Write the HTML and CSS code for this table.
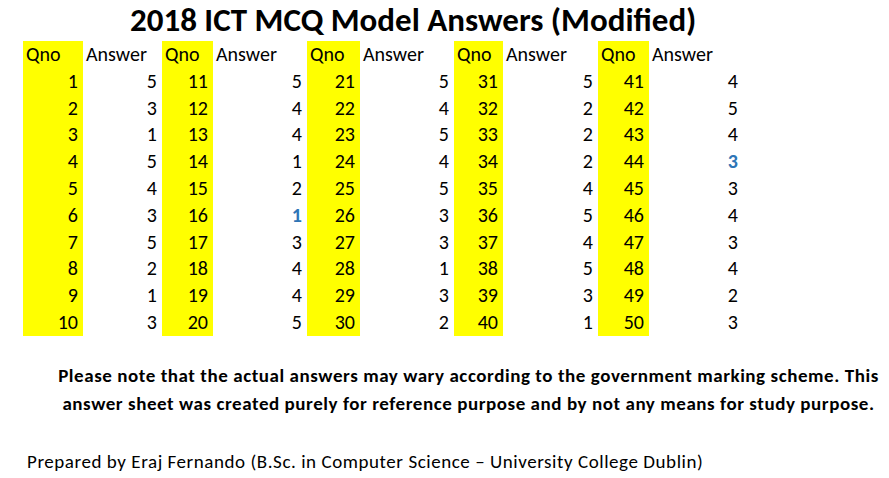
FILE: index.html
```html
<!DOCTYPE html>
<html>
<head>
<meta charset="utf-8">
<link rel="stylesheet" href="styles.css">
</head>
<body>
<div class="sheet">
  <h1 class="title">2018 ICT MCQ Model Answers (Modified)</h1>
  <table class="answers">
    <colgroup>
      <col class="c1"><col class="c2"><col class="c3"><col class="c4"><col class="c5"><col class="c6"><col class="c7"><col class="c8"><col class="c9"><col class="c10">
    </colgroup>
    <tr class="head">
      <td class="q">Qno</td><td>Answer</td><td class="q">Qno</td><td>Answer</td><td class="q">Qno</td><td>Answer</td><td class="q">Qno</td><td>Answer</td><td class="q">Qno</td><td>Answer</td>
    </tr>
    <tr><td class="q">1</td><td>5</td><td class="q">11</td><td>5</td><td class="q">21</td><td>5</td><td class="q">31</td><td>5</td><td class="q">41</td><td>4</td></tr>
    <tr><td class="q">2</td><td>3</td><td class="q">12</td><td>4</td><td class="q">22</td><td>4</td><td class="q">32</td><td>2</td><td class="q">42</td><td>5</td></tr>
    <tr><td class="q">3</td><td>1</td><td class="q">13</td><td>4</td><td class="q">23</td><td>5</td><td class="q">33</td><td>2</td><td class="q">43</td><td>4</td></tr>
    <tr><td class="q">4</td><td>5</td><td class="q">14</td><td>1</td><td class="q">24</td><td>4</td><td class="q">34</td><td>2</td><td class="q">44</td><td class="mod">3</td></tr>
    <tr><td class="q">5</td><td>4</td><td class="q">15</td><td>2</td><td class="q">25</td><td>5</td><td class="q">35</td><td>4</td><td class="q">45</td><td>3</td></tr>
    <tr><td class="q">6</td><td>3</td><td class="q">16</td><td class="mod">1</td><td class="q">26</td><td>3</td><td class="q">36</td><td>5</td><td class="q">46</td><td>4</td></tr>
    <tr><td class="q">7</td><td>5</td><td class="q">17</td><td>3</td><td class="q">27</td><td>3</td><td class="q">37</td><td>4</td><td class="q">47</td><td>3</td></tr>
    <tr><td class="q">8</td><td>2</td><td class="q">18</td><td>4</td><td class="q">28</td><td>1</td><td class="q">38</td><td>5</td><td class="q">48</td><td>4</td></tr>
    <tr><td class="q">9</td><td>1</td><td class="q">19</td><td>4</td><td class="q">29</td><td>3</td><td class="q">39</td><td>3</td><td class="q">49</td><td>2</td></tr>
    <tr><td class="q">10</td><td>3</td><td class="q">20</td><td>5</td><td class="q">30</td><td>2</td><td class="q">40</td><td>1</td><td class="q">50</td><td>3</td></tr>
  </table>
  <p class="note">Please note that the actual answers may wary according to the government marking scheme. This<br>answer sheet was created purely for reference purpose and by not any means for study purpose.</p>
  <p class="credit">Prepared by Eraj Fernando (B.Sc. in Computer Science – University College Dublin)</p>
</div>
</body>
</html>
```
FILE: styles.css
```css
html, body {
  margin: 0;
  padding: 0;
  background: #ffffff;
}
body {
  font-family: Calibri, Carlito, Lato, "Liberation Sans", sans-serif;
  color: #000000;
}
.sheet {
  width: 889px;
  height: 478px;
  overflow: hidden;
}
.title {
  margin: 0;
  padding: 1px 0 0 130px;
  font-size: 33px;
  line-height: 39px;
  height: 40px;
  font-weight: bold;
  white-space: nowrap;
}
.answers {
  margin-left: 23px;
  border-collapse: collapse;
  table-layout: fixed;
  width: 720px;
  font-size: 20px;
}
.answers td {
  height: 26.8px;
  padding: 0 5px 0 3px;
  text-align: right;
  line-height: 26.8px;
  white-space: nowrap;
  vertical-align: bottom;
}
.answers .head td {
  text-align: left;
}
.answers td.q {
  background: #ffff00;
}
.answers td.mod {
  color: #2e75b6;
  font-weight: bold;
}
.c1 { width: 60px; }
.c2 { width: 79px; }
.c3 { width: 51px; }
.c4 { width: 94px; }
.c5 { width: 53px; }
.c6 { width: 94px; }
.c7 { width: 49px; }
.c8 { width: 95px; }
.c9 { width: 51px; }
.c10 { width: 94px; }
.note {
  margin: 26px 0 0 0;
  width: 937px;
  text-align: center;
  font-weight: bold;
  font-size: 19px;
  letter-spacing: 0.56px;
  line-height: 28px;
  white-space: nowrap;
}
.credit {
  margin: 33px 0 0 27px;
  font-size: 19px;
  letter-spacing: 0.56px;
  line-height: 22px;
  white-space: nowrap;
}
```
